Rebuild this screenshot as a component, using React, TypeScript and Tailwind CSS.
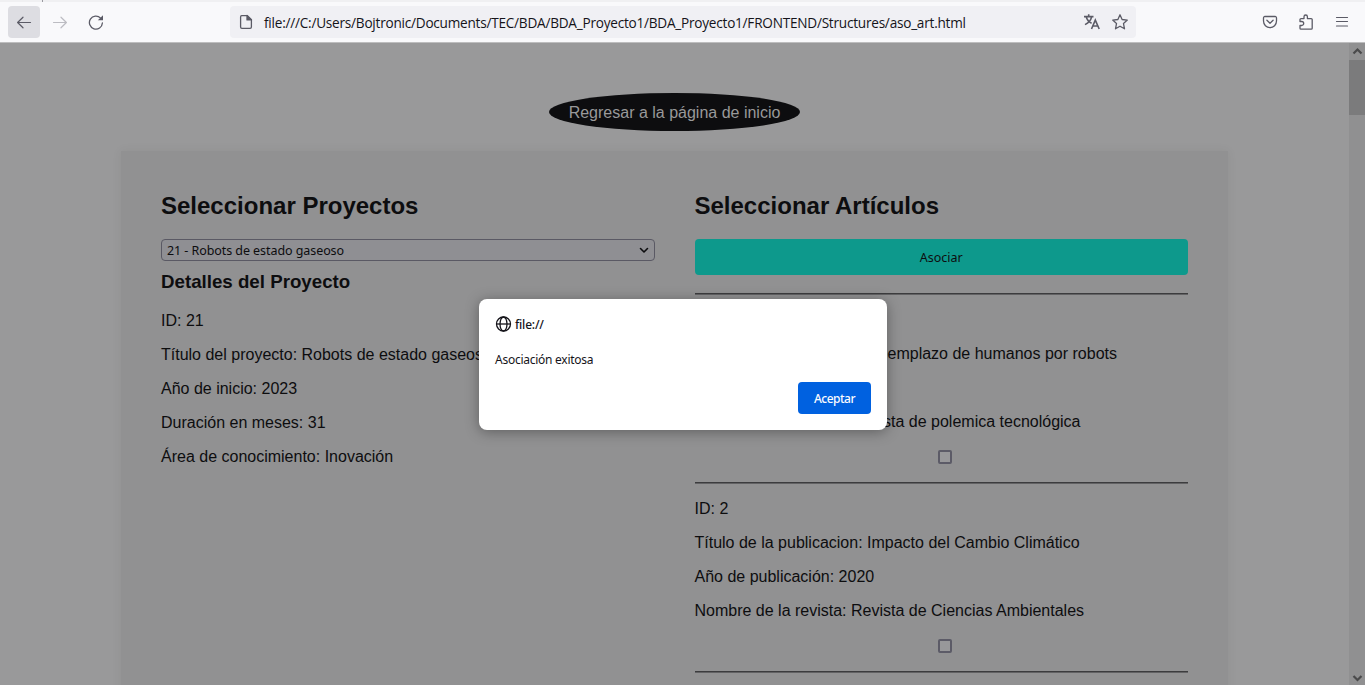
import React from 'react';

const articles = [
  {
    id: 1,
    title: 'Reemplazo de humanos por robots',
    year: 2022,
    journal: 'Revista de polemica tecnológica',
  },
  {
    id: 2,
    title: 'Impacto del Cambio Climático',
    year: 2020,
    journal: 'Revista de Ciencias Ambientales',
  },
];

const projectDetails = [
  'ID: 21',
  'Título del proyecto: Robots de estado gaseoso',
  'Año de inicio: 2023',
  'Duración en meses: 31',
  'Área de conocimiento: Inovación',
];

function Toolbar() {
  return (
    <header className="h-[43px] shrink-0 border-b border-[#bdbdbe] bg-[#f9f9fb]">
      <div className="flex h-[2px] bg-[#f0f0f2]">
        <div className="ml-[42px] h-[2px] w-px bg-[#9a9aa0]" />
      </div>
      <div className="flex h-10 items-center pl-2 text-[#5b5b66]">
        <div className="flex h-8 w-8 items-center justify-center rounded bg-[#dddde2]">
          <svg width="16" height="16" viewBox="0 0 16 16" fill="none" stroke="#5b5b66" strokeWidth="1.2" strokeLinecap="round" strokeLinejoin="round">
            <path d="M14.5 8.5H1.8M7 3.2 1.6 8.5 7 13.8" />
          </svg>
        </div>
        <svg className="ml-3" width="16" height="16" viewBox="0 0 16 16" fill="none" stroke="#bcbcc2" strokeWidth="1.2" strokeLinecap="round" strokeLinejoin="round">
          <path d="M1.5 8.5h12.7M9 3.2l5.4 5.3L9 13.8" />
        </svg>
        <svg className="ml-5" width="16" height="16" viewBox="0 0 16 16" fill="none" stroke="#5b5b66" strokeWidth="1.3" strokeLinecap="round">
          <path d="M12.6 4.1A6.5 6.5 0 1 0 14.4 9" />
          <path d="M15 1.2v5.1H9.8z" fill="#5b5b66" stroke="none" />
        </svg>
        <div className="ml-[126px] flex h-8 w-[906px] items-center rounded bg-[#f0f0f4]">
          <svg className="ml-2" width="16" height="16" viewBox="0 0 16 16" fill="none" stroke="#5b5b66" strokeWidth="1.3" strokeLinejoin="round">
            <path d="M3.7 1.6h5.6l4.1 4.1v7.4a1.3 1.3 0 0 1-1.3 1.3H3.9a1.3 1.3 0 0 1-1.3-1.3V2.9a1.3 1.3 0 0 1 1.1-1.3z" />
            <path d="M9 1.4v4.5h4.5z" fill="#5b5b66" />
          </svg>
          <span className="ml-[10px] w-[820px] whitespace-nowrap pt-[2px] font-['Open_Sans',sans-serif] text-[13.6px] leading-5 tracking-[-0.231px] text-[#15141a]">
            file:///C:/Users/Bojtronic/Documents/TEC/BDA/BDA_Proyecto1/BDA_Proyecto1/FRONTEND/Structures/aso_art.html
          </span>
          <svg width="16" height="16" viewBox="0 0 16 16" fill="none" stroke="#5b5b66" strokeWidth="1.6">
            <path d="M0 2.6h9.5M4.7.3v2.3M7.6 2.8C6.9 6 4.6 8.8 1 10.6M2.2 2.8C3 5.8 4.8 8 7.6 9.3" />
            <path d="M7.5 15 11.3 6.1 15.2 15M8.8 12h5" />
          </svg>
          <svg className="ml-3" width="16" height="16" viewBox="0 0 16 16" fill="none" stroke="#5b5b66" strokeWidth="1.3" strokeLinejoin="round">
            <path d="M8 .8l2.1 4.7 5.2.6-3.8 3.5 1 5.2L8 12.2l-4.5 2.6 1-5.2L.7 6.1l5.2-.6z" />
          </svg>
        </div>
        <svg className="ml-[126px]" width="16" height="16" viewBox="0 0 16 16" fill="none" stroke="#5b5b66" strokeWidth="1.3" strokeLinecap="round" strokeLinejoin="round">
          <path d="M2.9 2.5h10.200a1.400 1.400 0 0 1 1.400 1.400v3.200a6.500 6.500 0 0 1-13 0V3.900a1.400 1.400 0 0 1 1.400-1.400z" />
          <path d="M4.900 6.300 8 9.200l3.100-2.900" />
        </svg>
        <svg className="ml-5" width="16" height="16" viewBox="0 0 16 16" fill="none" stroke="#5b5b66" strokeWidth="1.3" strokeLinejoin="round">
          <path d="M2 7.500V5.600a1 1 0 0 1 1-1h3V2.700a1.700 1.700 0 0 1 3.400 0v1.900h3.800a1 1 0 0 1 1 1v8.600a1 1 0 0 1-1 1H3a1 1 0 0 1-1-1V11.500h1.700a2 2 0 0 0 0-4z" />
        </svg>
        <svg className="ml-5" width="16" height="16" viewBox="0 0 16 16" fill="none" stroke="#5b5b66" strokeWidth="1.2" strokeLinecap="round">
          <path d="M2.500 3.500h11M2.500 7.500h11M2.500 12h11" />
        </svg>
      </div>
    </header>
  );
}

function Scrollbar() {
  return (
    <div className="flex w-4 shrink-0 flex-col items-center bg-[#909091]">
      <svg className="shrink-0" width="16" height="17" viewBox="0 0 16 17" fill="none" stroke="#4a4a4b" strokeWidth="2.200">
        <path d="M4.500 10.500 8.500 6.500l4 4" />
      </svg>
      <div className="h-[55px] w-4 bg-[#7b7b7c]" />
      <div className="flex-1" />
      <svg className="shrink-0" width="16" height="17" viewBox="0 0 16 17" fill="none" stroke="#4a4a4b" strokeWidth="2.200">
        <path d="M4.500 8 8.500 12l4-4" />
      </svg>
    </div>
  );
}

function Rule() {
  return <hr className="h-[2px] border-0 border-t border-t-[#3c3c3e] bg-[#626264]" />;
}

function Dialog() {
  return (
    <div role="alertdialog" className="absolute left-[479px] top-[299px] flex h-[131px] w-[408px] flex-col rounded-lg bg-white px-4 pb-4 pt-4 font-['Noto_Sans',sans-serif] text-[12px] text-[#15141a] shadow-[0_2px_14px_rgba(0,0,0,0.35)]">
      <div className="flex h-[18px] items-center">
        <svg width="17" height="16" viewBox="0 0 17 16" fill="none" stroke="#15141a" strokeWidth="1.300">
          <circle cx="8.500" cy="8" r="7" />
          <ellipse cx="8.500" cy="8" rx="3.500" ry="7" />
          <path d="M1.500 8h14" />
        </svg>
        <span className="ml-[3px] pt-px font-medium tracking-[-0.2px]">file://</span>
      </div>
      <p className="mt-[17px] h-[18px] leading-[19px] tracking-[-0.26px]">Asociación exitosa</p>
      <button className="mt-[14px] h-8 w-[73px] self-end rounded bg-[#0061e0] pt-[2px] text-[12px] font-medium tracking-[-0.500px] text-[#fbfbfe]">Aceptar</button>
    </div>
  );
}

export default function App() {
  return (
    <div className="relative flex h-[685px] w-[1365px] flex-col overflow-hidden bg-[#99999a] font-['Liberation_Sans',Arial,sans-serif] text-[16px] text-[#0d0d0f]">
      <Toolbar />
      <div className="flex min-h-0 flex-1">
        <main className="flex min-w-0 flex-1 flex-col items-center overflow-hidden pt-[50px]">
          <a className="flex h-[38px] w-[251px] shrink-0 items-center justify-center rounded-[50%] bg-[#0d0d0f] pt-[2px] text-[#99999a]">
            Regresar a la página de inicio
          </a>
          <section className="mt-5 grid h-[700px] w-[1107px] shrink-0 grid-cols-2 gap-10 bg-[#919192] px-10 pt-10 shadow-[0_0_10px_rgba(0,0,0,0.06)]">
            <div>
              <h2 className="h-[48px] pt-[1px] text-[24px] font-bold leading-[28px]">Seleccionar Proyectos</h2>
              <div className="flex h-[22px] items-center justify-between rounded-[4px] border border-[#5a5964] bg-[#8f8f93] pl-[5px] pr-[5px] font-['Noto_Sans',sans-serif] text-[12.5px]">
                <span className="pt-[2px] tracking-[-0.07px]">21 - Robots de estado gaseoso</span>
                <svg width="10" height="8" viewBox="0 0 10 8" fill="none" stroke="#0d0d0f" strokeWidth="1.600" strokeLinecap="round" strokeLinejoin="round">
                  <path d="M1.500 2.500 5 6 8.500 2.500" />
                </svg>
              </div>
              <h3 className="mb-[11px] mt-[10px] h-[22px] text-[18.72px] font-bold leading-[22px]">Detalles del Proyecto</h3>
              {projectDetails.map((line) => (
                <p key={line} className="h-[34px] leading-[34px]">{line}</p>
              ))}
            </div>
            <div>
              <h2 className="h-[48px] pt-[1px] text-[24px] font-bold leading-[28px]">Seleccionar Artículos</h2>
              <button className="mb-[18px] block h-9 w-full rounded-[4px] bg-[#0d998c] pt-[2px] font-['Noto_Sans',sans-serif] text-[12.5px]">Asociar</button>
              <Rule />
              {articles.map((a) => (
                <article key={a.id}>
                  <div className="flex h-[187px] flex-col pt-[8px]">
                    <p className="h-[34px] leading-[34px]">ID: {a.id}</p>
                    <p className="h-[34px] leading-[34px]">Título de la publicacion: {a.title}</p>
                    <p className="h-[34px] leading-[34px]">Año de publicación: {a.year}</p>
                    <p className="h-[34px] leading-[34px]">Nombre de la revista: {a.journal}</p>
                    <span role="checkbox" aria-checked="false" className="ml-[243.500px] mt-[11px] block h-[14px] w-[14px] rounded-[2px] border-2 border-[#5c5b67] bg-[#98989a]" />
                  </div>
                  <Rule />
                </article>
              ))}
            </div>
          </section>
        </main>
        <Scrollbar />
      </div>
      <Dialog />
    </div>
  );
}
